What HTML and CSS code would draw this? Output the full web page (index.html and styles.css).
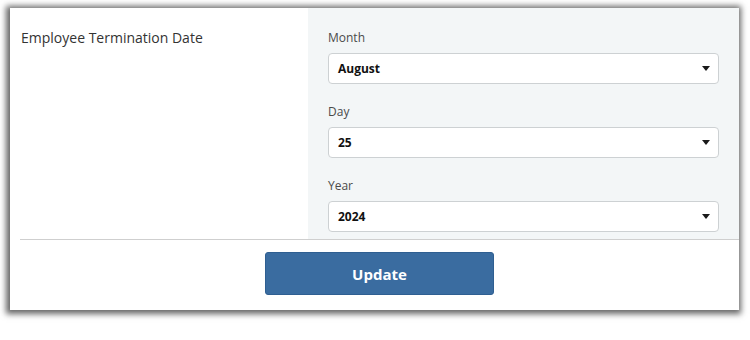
FILE: index.html
```html
<!DOCTYPE html>
<html>
<head>
<meta charset="utf-8">
<link rel="stylesheet" href="styles.css">
</head>
<body>
<div class="card">
  <div class="row">
    <div class="field-name">Employee Termination Date</div>
    <div class="panel">
      <div class="group">
        <div class="label">Month</div>
        <div class="select"><span class="value">August</span><span class="caret"></span></div>
      </div>
      <div class="group">
        <div class="label">Day</div>
        <div class="select"><span class="value">25</span><span class="caret"></span></div>
      </div>
      <div class="group">
        <div class="label">Year</div>
        <div class="select"><span class="value">2024</span><span class="caret"></span></div>
      </div>
    </div>
  </div>
  <div class="divider"></div>
  <div class="footer">
    <button class="btn">Update</button>
  </div>
</div>
</body>
</html>
```
FILE: styles.css
```css
html, body {
  margin: 0;
  padding: 0;
  background: #ffffff;
}
body {
  font-family: "Open Sans", "Liberation Sans", sans-serif;
  padding: 8px 0 30px 10px;
}
.card {
  width: 729px;
  height: 302px;
  background: #ffffff;
  box-shadow: -1px 1px 6px 3px rgba(0, 0, 0, 0.6);
  display: flex;
  flex-direction: column;
}
.row {
  display: flex;
  height: 231px;
}
.field-name {
  width: 287px;
  padding: 20px 0 0 11px;
  font-size: 14px;
  line-height: 20px;
  color: #333333;
}
.panel {
  flex: 1;
  background: #f3f6f7;
  padding: 22px 20px 7px 20px;
  display: flex;
  flex-direction: column;
  gap: 20px;
}
.group {
  display: flex;
  flex-direction: column;
  gap: 7px;
}
.label {
  font-size: 12px;
  line-height: 16px;
  color: #4a4a4a;
}
.select {
  height: 29px;
  border: 1px solid #cdd1d3;
  border-radius: 4px;
  background: #ffffff;
  display: flex;
  align-items: center;
  justify-content: space-between;
  padding: 0 8px 0 9px;
}
.value {
  font-size: 12px;
  font-weight: 700;
  color: #111111;
}
.caret {
  width: 0;
  height: 0;
  border-left: 4px solid transparent;
  border-right: 4px solid transparent;
  border-top: 5px solid #1a1a1a;
}
.divider {
  margin-left: 10px;
  height: 1px;
  background: #cfcfcf;
}
.footer {
  display: flex;
  justify-content: center;
  padding: 12px 0 0 10px;
}
.btn {
  width: 229px;
  height: 43px;
  border: 1px solid #2f5f91;
  border-radius: 3px;
  background: #3a6ca0;
  color: #ffffff;
  font-family: "Open Sans", "Liberation Sans", sans-serif;
  font-size: 15px;
  font-weight: 700;
  padding: 0;
}
```
